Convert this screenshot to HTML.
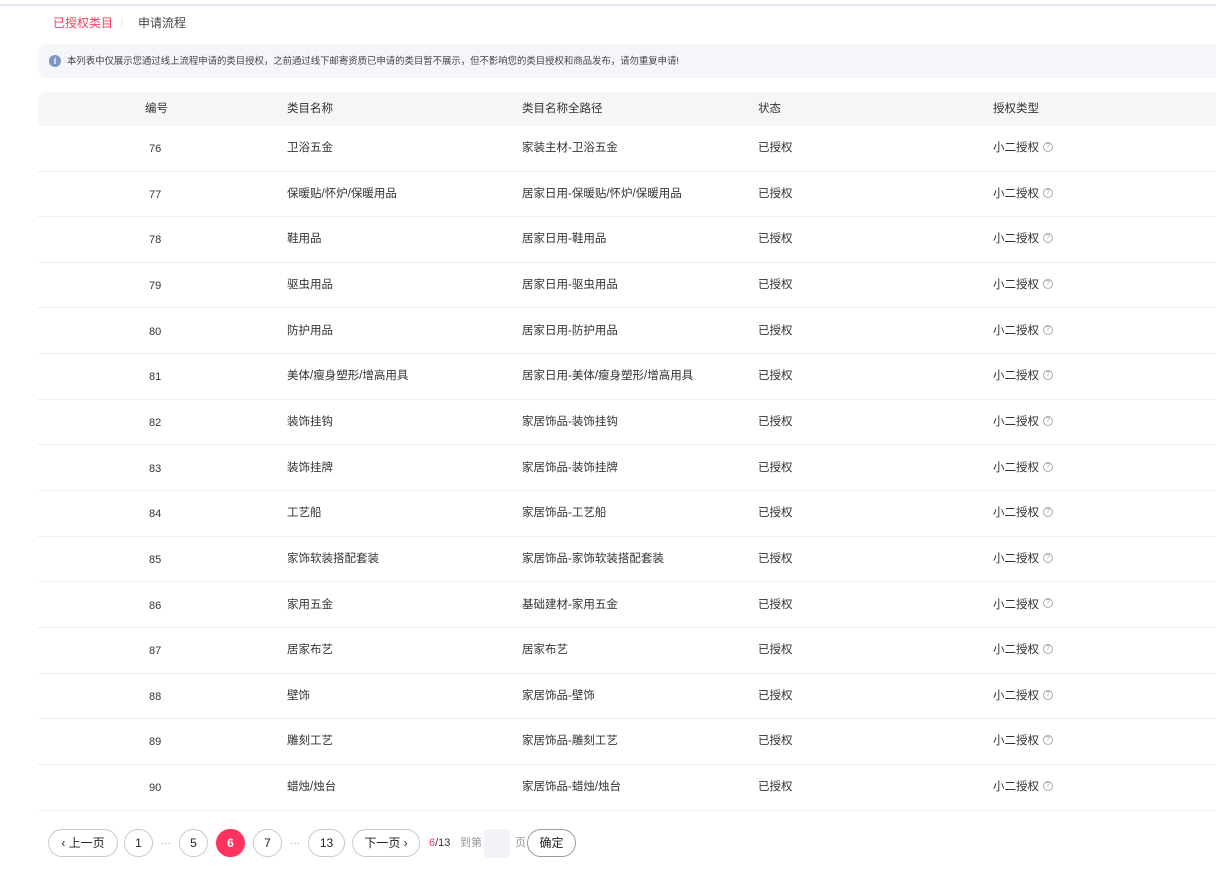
<!DOCTYPE html>
<html><head><meta charset="utf-8"><style>
*{margin:0;padding:0;box-sizing:border-box}
body{width:1216px;height:872px;background:#fff;font-family:"Liberation Sans","Noto Sans CJK SC",sans-serif;font-size:12px;color:#333;position:relative;overflow:hidden}
.topline{position:absolute;left:0;top:4px;width:1216px;height:2px;background:#e4e3ee}
.tabs span{position:absolute;white-space:nowrap;line-height:14px;font-size:12px}
.notice{position:absolute;left:38px;top:44px;width:1190px;height:34px;background:#f5f6fa;border-radius:8px;font-size:9.4px;color:#444;line-height:34px;padding-left:29px;white-space:nowrap}
.notice i{position:absolute;left:11px;top:11px;width:12px;height:12px;border-radius:50%;background:#7e95c8;color:#fff;font-style:normal;font-size:9px;line-height:12px;text-align:center;font-weight:bold}
.thead{position:absolute;left:38px;top:92px;width:1190px;height:34px;background:#f5f6f8;border-radius:8px 0 0 0}
.cell{position:absolute;white-space:nowrap;font-size:11.5px;line-height:16px;height:16px;color:#333}
.row{position:absolute;left:38px;width:1190px;height:46px;border-bottom:1px solid #eeeef2}
.q{display:inline-block;width:10px;height:10px;border:1px solid #aaa;border-radius:50%;font-size:7px;line-height:8px;text-align:center;color:#999;margin-left:4px;vertical-align:middle;position:relative;top:-1px}
.pg{position:absolute;top:829px;height:28px;border:1px solid #c9c9d1;border-radius:14px;text-align:center;line-height:26px;font-size:12px;color:#222;background:#fff}
.dots{position:absolute;top:837px;color:#999;font-size:10px;line-height:14px}
</style></head><body>
<div class="topline"></div>
<div class="tabs"><span style="left:53px;top:16px;color:#ff3a62">已授权类目</span><span style="left:121px;top:17px;color:#ccc;font-size:7px">|</span><span style="left:138px;top:16px;color:#444">申请流程</span></div>
<div class="notice"><i>i</i>本列表中仅展示您通过线上流程申请的类目授权，之前通过线下邮寄资质已申请的类目暂不展示，但不影响您的类目授权和商品发布，请勿重复申请!</div>
<div class="thead"></div>
<div class="cell" style="left:145px;top:101px">编号</div>
<div class="cell" style="left:287px;top:101px">类目名称</div>
<div class="cell" style="left:522px;top:101px">类目名称全路径</div>
<div class="cell" style="left:758px;top:101px">状态</div>
<div class="cell" style="left:993px;top:101px">授权类型</div>
<div id="rows"></div>
<script>
var d=[["76","卫浴五金","家装主材-卫浴五金"],["77","保暖贴/怀炉/保暖用品","居家日用-保暖贴/怀炉/保暖用品"],["78","鞋用品","居家日用-鞋用品"],["79","驱虫用品","居家日用-驱虫用品"],["80","防护用品","居家日用-防护用品"],["81","美体/瘦身塑形/增高用具","居家日用-美体/瘦身塑形/增高用具"],["82","装饰挂钩","家居饰品-装饰挂钩"],["83","装饰挂牌","家居饰品-装饰挂牌"],["84","工艺船","家居饰品-工艺船"],["85","家饰软装搭配套装","家居饰品-家饰软装搭配套装"],["86","家用五金","基础建材-家用五金"],["87","居家布艺","居家布艺"],["88","壁饰","家居饰品-壁饰"],["89","雕刻工艺","家居饰品-雕刻工艺"],["90","蜡烛/烛台","家居饰品-蜡烛/烛台"]];
var h="";d.forEach(function(r,i){var c=148+i*45.65;var t=c-8;
h+='<div class="row" style="top:'+(c-22.5)+'px"></div>';
h+='<div class="cell" style="left:149px;top:'+(t+1)+'px;font-size:11px">'+r[0]+'</div><div class="cell" style="left:287px;top:'+t+'px">'+r[1]+'</div><div class="cell" style="left:522px;top:'+t+'px">'+r[2]+'</div><div class="cell" style="left:758px;top:'+t+'px">已授权</div><div class="cell" style="left:993px;top:'+t+'px">小二授权<span class="q">?</span></div>';});
document.getElementById("rows").innerHTML=h;
</script>
<div class="pg" style="left:48px;width:70px">‹ 上一页</div>
<div class="pg" style="left:124px;width:29px">1</div>
<div class="dots" style="left:161px">···</div>
<div class="pg" style="left:179px;width:29px">5</div>
<div class="pg" style="left:216px;width:29px;background:#ff345e;border-color:#ff345e;color:#fff;font-weight:bold">6</div>
<div class="pg" style="left:253px;width:29px">7</div>
<div class="dots" style="left:290px">···</div>
<div class="pg" style="left:308px;width:37px">13</div>
<div class="pg" style="left:352px;width:68px">下一页 ›</div>
<div class="cell" style="left:429px;top:835px;font-size:11px"><span style="color:#ff345e">6</span>/13</div>
<div class="cell" style="left:460px;top:835px;font-size:11px;color:#999">到第</div>
<div style="position:absolute;left:484px;top:829px;width:26px;height:29px;background:#f2f3f7;border-radius:4px"></div>
<div class="cell" style="left:515px;top:835px;font-size:11px;color:#999">页</div>
<div class="pg" style="left:527px;width:49px;border-color:#999">确定</div>
</body></html>
